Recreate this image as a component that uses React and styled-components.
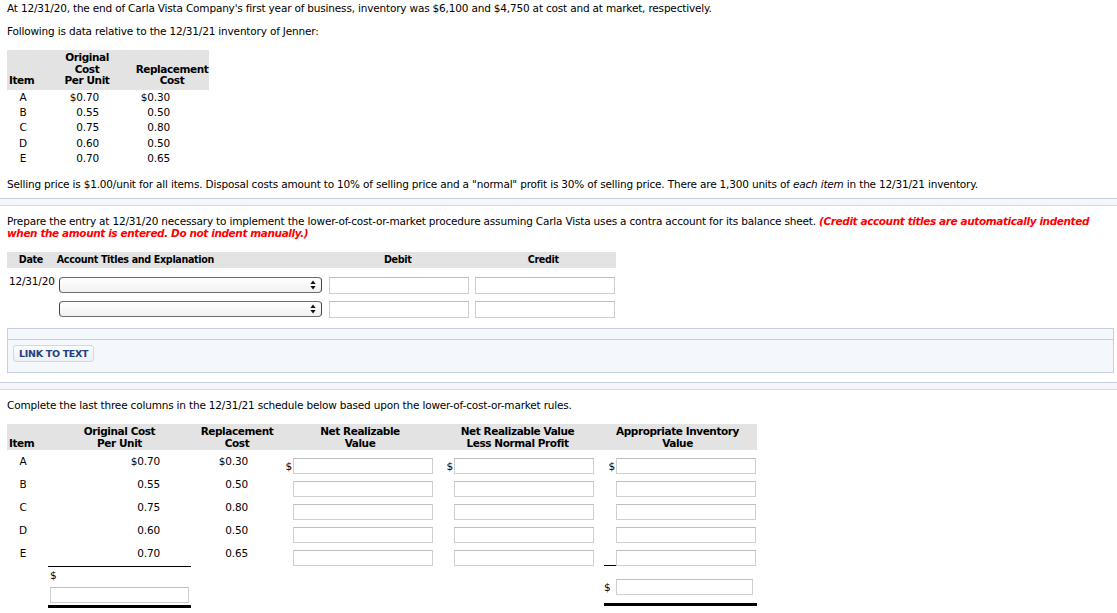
import React from "react";
import styled, { createGlobalStyle } from "styled-components";

const Global = createGlobalStyle`
  html, body { margin: 0; padding: 0; background: #fff; }
  body {
    font-family: "DejaVu Sans", Verdana, "Liberation Sans", sans-serif;
    font-size: 10.5px;
    letter-spacing: -0.18px;
    color: #000;
  }
  * { box-sizing: border-box; }
`;

const Page = styled.div`
  padding-top: 1px;
  width: 1117px;
`;

const Inset = styled.div`
  padding: 0 3px 0 7px;
`;

const Para = styled.p`
  margin: ${(p) => p.$mt || 0}px 0 0;
  line-height: ${(p) => p.$lh || 15}px;
`;

const Red = styled.span`
  color: #f00;
  font-weight: bold;
  font-style: italic;
  letter-spacing: -0.4px;
`;

const Separator = styled.div`
  margin-top: ${(p) => p.$mt}px;
  height: 8px;
  background: #f4f6f9;
  border-top: 1px solid #c4cedb;
  border-bottom: 1px solid #d3dbe5;
`;

/* ---------- data table 1 ---------- */
const DataTable = styled.table`
  border-collapse: collapse;
  margin-top: ${(p) => p.$mt}px;
  table-layout: fixed;
`;

const HeadCell = styled.th`
  background: #e3e3e3;
  font-weight: bold;
  letter-spacing: -0.42px;
  vertical-align: bottom;
  text-align: ${(p) => p.$align || "center"};
  padding: ${(p) => p.$pad || "2px 0 3.5px"};
  line-height: ${(p) => p.$lh || 11.5}px;
  width: ${(p) => p.$w}px;
  white-space: nowrap;
`;

const ValCell = styled.td`
  padding: 0 ${(p) => p.$pr || 0}px 0 ${(p) => p.$pl || 0}px;
  text-align: ${(p) => p.$align || "right"};
  height: 15.2px;
  line-height: 15.2px;
  vertical-align: middle;
`;

/* ---------- journal ---------- */
const JTable = styled.table`
  border-collapse: collapse;
  margin-top: 12.6px;
  table-layout: fixed;
`;

const JHead = styled.th`
  background: #e3e3e3;
  height: 16px;
  line-height: 16px;
  font-size: 9.6px;
  letter-spacing: -0.35px;
  padding: ${(p) => p.$pad || 0};
  text-align: ${(p) => p.$align || "center"};
  width: ${(p) => p.$w}px;
  white-space: nowrap;
`;

const JCell = styled.td`
  vertical-align: top;
  padding: ${(p) => p.$pt}px 0 0 ${(p) => p.$pl || 0}px;
  line-height: 13px;
  white-space: nowrap;
`;

const SelectBox = styled.div`
  width: 263px;
  height: 16px;
  border: 1px solid #6c6c6c;
  border-left-color: #444;
  border-right-color: #444;
  border-radius: 4px;
  background: linear-gradient(#ffffff, #f1f1f1);
  display: flex;
  align-items: center;
  justify-content: flex-end;
  padding-right: 5px;
  margin-left: 4px;
`;

const TextInput = styled.div`
  width: ${(p) => p.$w || 139}px;
  height: ${(p) => p.$h || 16}px;
  border: 1px solid #cfcfcf;
  border-top-color: #bdbdbd;
  background: #fff;
  margin-left: ${(p) => p.$ml || 0}px;
  flex: none;
`;

/* ---------- link box ---------- */
const LinkBox = styled.div`
  margin-top: 10px;
  border: 1px solid #c6d0dc;
  background: #f4f7fb;
`;

const LinkStrip = styled.div`
  height: 11px;
  border-bottom: 1px solid #c6d0dc;
`;

const LinkBody = styled.div`
  padding: 5px 5px 10px;
`;

const LinkButton = styled.button`
  height: 17px;
  padding: 0 5px;
  border: 1px solid #d2d8e0;
  border-radius: 3px;
  background: linear-gradient(#fbfcfd, #eef1f5);
  color: #22407f;
  font-family: "DejaVu Sans", Verdana, sans-serif;
  font-size: 9.5px;
  font-weight: bold;
  line-height: 15px;
  letter-spacing: -0.3px;
  cursor: pointer;
`;

/* ---------- schedule table ---------- */
const SHead = styled.th`
  background: #e3e3e3;
  vertical-align: bottom;
  letter-spacing: -0.42px;
  text-align: ${(p) => p.$align || "center"};
  padding: ${(p) => p.$pad || "1px 0"};
  line-height: 12px;
  width: ${(p) => p.$w}px;
  white-space: nowrap;
`;

const SVal = styled.td`
  vertical-align: top;
  text-align: ${(p) => p.$align || "right"};
  padding: ${(p) => p.$pt}px ${(p) => p.$pr || 0}px 0 0;
  line-height: 13px;
`;

const SMoney = styled.td`
  vertical-align: top;
  padding: ${(p) => p.$pt}px ${(p) => p.$pr}px 0 0;
`;

const MoneyWrap = styled.div`
  display: flex;
  align-items: center;
  justify-content: flex-end;
  margin-left: ${(p) => p.$ml || 0}px;
  border-bottom: ${(p) => (p.$under ? "1px solid #000" : "none")};
  height: 16px;
`;

const Dollar = styled.span`
  line-height: 13px;
  margin-right: 1px;
  visibility: ${(p) => (p.$show ? "visible" : "hidden")};
`;

const TotalLeft = styled.td`
  vertical-align: top;
  border-top: 1px solid #000;
  border-bottom: 3px solid #000;
  padding: 2px 2px 1px;
  line-height: 13px;
`;

const TotalRight = styled.td`
  vertical-align: top;
  padding: 0;
`;

const TotalRightInner = styled.div`
  margin-left: 6px;
  padding: 13px 4px 8px 0;
  border-bottom: 3px solid #000;
  display: flex;
  align-items: center;
  justify-content: space-between;
`;

const StackDollar = styled.div`
  line-height: 13px;
  margin-bottom: 5px;
`;

function UpDown() {
  return (
    <svg width="6" height="10" viewBox="0 0 6 10">
      <path d="M3 0.5 L5.6 4 L0.4 4 Z" fill="#111" />
      <path d="M3 9.5 L5.6 6 L0.4 6 Z" fill="#111" />
    </svg>
  );
}

const inv = [
  ["A", "$0.70", "$0.30"],
  ["B", "0.55", "0.50"],
  ["C", "0.75", "0.80"],
  ["D", "0.60", "0.50"],
  ["E", "0.70", "0.65"],
];

export default function App() {
  return (
    <Page>
      <Global />
      <Inset>
        <Para>
          At 12/31/20, the end of Carla Vista Company's first year of business, inventory was $6,100 and $4,750 at cost and at market, respectively.
        </Para>
        <Para $mt={8}>Following is data relative to the 12/31/21 inventory of Jenner:</Para>

        <DataTable $mt={11}>
          <thead>
            <tr>
              <HeadCell $w={32} $align="left" $pad="2px 0 3.5px 2px">Item</HeadCell>
              <HeadCell $w={96}>
                Original
                <br />
                Cost
                <br />
                Per Unit
              </HeadCell>
              <HeadCell $w={74}>
                Replacement
                <br />
                Cost
              </HeadCell>
            </tr>
          </thead>
          <tbody>
            {inv.map(([item, orig, repl]) => (
              <tr key={item}>
                <ValCell $align="center">{item}</ValCell>
                <ValCell $pr={36}>{orig}</ValCell>
                <ValCell $pr={39}>{repl}</ValCell>
              </tr>
            ))}
          </tbody>
        </DataTable>

        <Para $mt={11}>
          Selling price is $1.00/unit for all items. Disposal costs amount to 10% of selling price and a "normal" profit is 30% of selling price. There are 1,300 units of <i>each item</i> in the 12/31/21 inventory.
        </Para>
      </Inset>

      <Separator $mt={6} />

      <Inset>
        <Para $mt={9} $lh={12.4}>
          Prepare the entry at 12/31/20 necessary to implement the lower-of-cost-or-market procedure assuming Carla Vista uses a contra account for its balance sheet.{" "}
          <Red>(Credit account titles are automatically indented when the amount is entered. Do not indent manually.)</Red>
        </Para>

        <JTable>
          <thead>
            <tr>
              <JHead $w={46}>Date</JHead>
              <JHead $w={270} $align="left" $pad="0 0 0 2px">Account Titles and Explanation</JHead>
              <JHead $w={146}>Debit</JHead>
              <JHead $w={145}>Credit</JHead>
            </tr>
          </thead>
          <tbody>
            {[0, 1].map((i) => (
              <tr key={i}>
                <JCell $pt={7} $pl={2}>{i === 0 ? "12/31/20" : ""}</JCell>
                <JCell $pt={i === 0 ? 9 : 7}>
                  <SelectBox>
                    <UpDown />
                  </SelectBox>
                </JCell>
                <JCell $pt={i === 0 ? 9 : 7}>
                  <TextInput $w={140} $h={17} $ml={4} />
                </JCell>
                <JCell $pt={i === 0 ? 9 : 7}>
                  <TextInput $w={140} $h={17} $ml={4} />
                </JCell>
              </tr>
            ))}
          </tbody>
        </JTable>

        <LinkBox>
          <LinkStrip />
          <LinkBody>
            <LinkButton type="button">LINK TO TEXT</LinkButton>
          </LinkBody>
        </LinkBox>
      </Inset>

      <Separator $mt={9} />

      <Inset>
        <Para $mt={8}>Complete the last three columns in the 12/31/21 schedule below based upon the lower-of-cost-or-market rules.</Para>

        <DataTable $mt={11}>
          <thead>
            <tr>
              <SHead $w={41} $align="left" $pad="1px 0 1px 2px">Item</SHead>
              <SHead $w={143}>
                Original Cost
                <br />
                Per Unit
              </SHead>
              <SHead $w={92}>
                Replacement
                <br />
                Cost
              </SHead>
              <SHead $w={154}>
                Net Realizable
                <br />
                Value
              </SHead>
              <SHead $w={161}>
                Net Realizable Value
                <br />
                Less Normal Profit
              </SHead>
              <SHead $w={159}>
                Appropriate Inventory
                <br />
                Value
              </SHead>
            </tr>
          </thead>
          <tbody>
            {inv.map(([item, orig, repl], i) => {
              const pt = i === 0 ? 8 : 7;
              const first = i === 0;
              return (
                <tr key={item}>
                  <SVal $pt={pt - 3} $align="center" $pr={9}>{item}</SVal>
                  <SVal $pt={pt - 3} $pr={31}>{orig}</SVal>
                  <SVal $pt={pt - 3} $pr={35}>{repl}</SVal>
                  <SMoney $pt={pt} $pr={4}>
                    <MoneyWrap>
                      <Dollar $show={first}>$</Dollar>
                      <TextInput $w={140} />
                    </MoneyWrap>
                  </SMoney>
                  <SMoney $pt={pt} $pr={4}>
                    <MoneyWrap>
                      <Dollar $show={first}>$</Dollar>
                      <TextInput $w={140} />
                    </MoneyWrap>
                  </SMoney>
                  <SMoney $pt={pt} $pr={1}>
                    <MoneyWrap $ml={6} $under={i === 4}>
                      <Dollar $show={first}>$</Dollar>
                      <TextInput $w={140} />
                    </MoneyWrap>
                  </SMoney>
                </tr>
              );
            })}
            <tr>
              <td />
              <TotalLeft>
                <StackDollar>$</StackDollar>
                <TextInput $w={139} />
              </TotalLeft>
              <td />
              <td />
              <td />
              <TotalRight>
                <TotalRightInner>
                  <Dollar $show>$</Dollar>
                  <TextInput $w={137} />
                </TotalRightInner>
              </TotalRight>
            </tr>
          </tbody>
        </DataTable>
      </Inset>
    </Page>
  );
}
